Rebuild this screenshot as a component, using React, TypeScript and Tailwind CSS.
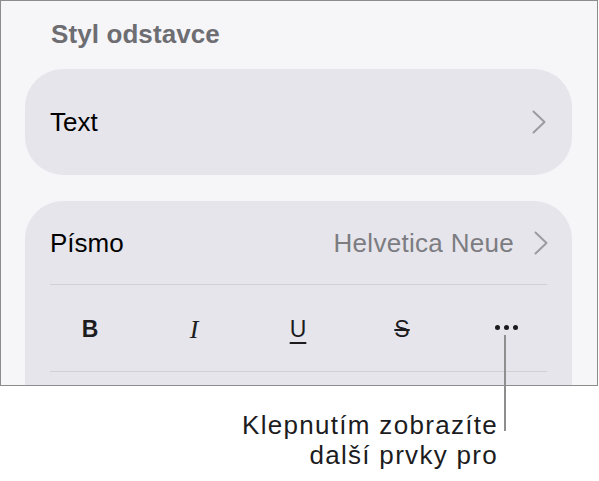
function Chevron() {
	return (
		<svg
			aria-hidden="true"
			viewBox="0 0 14 24"
			className="h-[24px] w-[14px] shrink-0"
			fill="none"
			stroke="#9b9ba0"
			strokeWidth={2}
			strokeLinecap="round"
			strokeLinejoin="round"
		>
			<path d="M1.5 1.5 12.5 12 1.5 22.5" />
		</svg>
	);
}

function FormatButton({ children }: { children: React.ReactNode }) {
	return (
		<div className="flex h-full w-[104px] shrink-0 items-center justify-center">
			{children}
		</div>
	);
}

export default function App() {
	return (
		<div className="relative h-[481px] w-[599px] bg-white font-['Liberation_Sans',Arial,sans-serif]">
			<div className="h-[386px] w-[598px] overflow-hidden border border-[#8c8c8c] bg-[#f6f6f9]">
				<h2 className="ml-[50px] mt-[18px] text-[26px] leading-[30px] font-bold tracking-[0.1px] text-[#6d6d72]">
					Styl odstavce
				</h2>

				<button
					type="button"
					className="ml-[24px] mt-[20px] flex h-[106px] w-[547px] items-center justify-between rounded-[38px] bg-[#e6e5eb] pl-[25px] pr-[26px] text-left"
				>
					<span className="text-[26px] leading-[30px] text-black">Text</span>
					<Chevron />
				</button>

				<div className="ml-[24px] mt-[26px] w-[547px] rounded-t-[38px] bg-[#e6e5eb] px-[25px] pb-[40px]">
					<div className="flex h-[84px] items-center justify-between border-b border-[#cfcfd4]">
						<span className="text-[26px] leading-[30px] text-black">Písmo</span>
						<span className="flex items-center gap-[20px]">
							<span className="text-[26px] leading-[30px] tracking-[0.3px] text-[#7c7c81]">
								Helvetica Neue
							</span>
							<span className="-mr-px">
								<Chevron />
							</span>
						</span>
					</div>

					<div className="h-[87px] border-b border-[#cfcfd4] pt-[2px]">
						<div className="-ml-[12px] flex h-full items-center">
							<FormatButton>
								<span className="text-[23px] font-bold text-[#1c1c1e]">B</span>
							</FormatButton>
							<FormatButton>
								<span className="font-['Liberation_Serif',serif] text-[26px] italic text-[#1c1c1e]">
									I
								</span>
							</FormatButton>
							<FormatButton>
								<span className="text-[23px] text-[#1c1c1e] underline decoration-[1.5px] underline-offset-[5px]">
									U
								</span>
							</FormatButton>
							<FormatButton>
								<span className="text-[23px] text-[#1c1c1e] line-through decoration-[1.5px]">
									S
								</span>
							</FormatButton>
							<FormatButton>
								<span className="flex items-center gap-[4px] pb-[4px] pl-[1px]">
									<span className="h-[5px] w-[5px] rounded-full bg-[#1c1c1e]" />
									<span className="h-[5px] w-[5px] rounded-full bg-[#1c1c1e]" />
									<span className="h-[5px] w-[5px] rounded-full bg-[#1c1c1e]" />
								</span>
							</FormatButton>
						</div>
					</div>
				</div>
			</div>

			{/* callout leader line */}
			<div className="absolute left-[504px] top-[335px] h-[96px] w-[2px] bg-[#8e8e8e]" />

			<p className="mt-[24px] pr-[101px] text-right text-[26px] leading-[30px] tracking-[1.3px] text-[#1c1c1e]">
				Klepnutím zobrazíte
				<br />
				další prvky pro
			</p>
		</div>
	);
}
